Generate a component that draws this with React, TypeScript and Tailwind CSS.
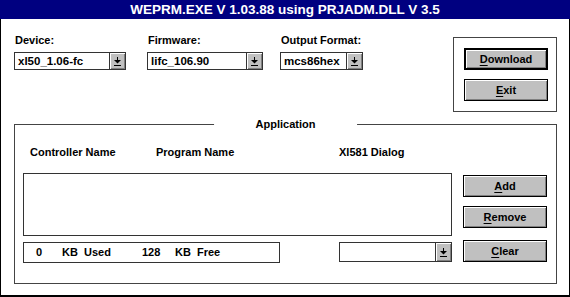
import React from "react";

function DropArrow() {
  return (
    <svg width="7" height="9" viewBox="0 0 7 9">
      <rect x="3" y="0" width="1" height="3" fill="#000" />
      <polygon points="0,3 7,3 3.5,6.5" fill="#000" />
      <rect x="0" y="8" width="7" height="1" fill="#000" />
    </svg>
  );
}

function Combo({ value, className }: { value: string; className: string }) {
  return (
    <div className={`flex border border-[#333] bg-white ${className}`}>
      <div className="flex-1 pl-[3px] text-[11.5px] leading-[16px] overflow-hidden whitespace-nowrap">{value}</div>
      <div className="w-[16px] border-l border-[#333] bg-[#c0c0c0] shadow-[inset_1px_1px_0_#fff,inset_-1px_-1px_0_#808080] flex items-center justify-center">
        <DropArrow />
      </div>
    </div>
  );
}

function Field({ label, value, className }: { label: string; value: string; className: string }) {
  return (
    <div className={className}>
      <div className="pl-px text-[11px] leading-[13px] mb-[5px]">{label}</div>
      <Combo value={value} className="h-[18px] w-full" />
    </div>
  );
}

function Btn({ k, rest, main, className }: { k: string; rest: string; main?: boolean; className?: string }) {
  return (
    <button
      className={`w-[84px] h-[22px] bg-[#c0c0c0] text-[11px] leading-none font-bold shadow-[inset_1px_1px_0_#fff,inset_-1px_-1px_0_#808080] ${
        main ? "border-2 border-black" : "border border-black"
      } ${className ?? ""}`}
    >
      <span className="underline underline-offset-2">{k}</span>
      {rest}
    </button>
  );
}

export default function App() {
  return (
    <div className="w-[570px] h-[297px] bg-white border-x border-b-2 border-black flex flex-col font-['Liberation_Sans',Arial,sans-serif] font-bold text-black">
      {/* Title bar */}
      <div className="h-[19px] -mx-px bg-[#000080] text-white text-[13.5px] leading-[19px] text-center">
        WEPRM.EXE V 1.03.88 using PRJADM.DLL V 3.5
      </div>

      {/* Top section */}
      <div className="flex pl-[13px]">
        <div className="flex pt-[15px]">
          <Field label="Device:" value="xl50_1.06-fc" className="w-[112px]" />
          <Field label="Firmware:" value="lifc_106.90" className="w-[116px] ml-[21px]" />
          <Field label="Output Format:" value="mcs86hex" className="w-[83px] ml-[17px]" />
        </div>
        <div className="ml-auto mr-[12px] mt-[18px] w-[104px] h-[75px] border border-[#444] pl-[10px] pt-[10px] flex flex-col gap-[9px]">
          <Btn k="D" rest="ownload" main />
          <Btn k="E" rest="xit" />
        </div>
      </div>

      {/* Application group */}
      <div className="relative mt-[12px] ml-[13px] mr-[12px] h-[160px] border border-[#444]">
        <div className="absolute -top-[7px] left-1/2 -translate-x-1/2 bg-white px-[42px] text-[11px] leading-[13px]">
          Application
        </div>
        <div className="flex pt-[21px] pl-[15px] text-[11px] leading-[13px]">
          <div className="w-[126px]">Controller Name</div>
          <div className="w-[183px]">Program Name</div>
          <div>Xl581 Dialog</div>
        </div>
        <div className="flex mt-[14px] ml-[8px]">
          <div className="w-[429px]">
            <div className="h-[63px] border border-[#333] bg-white" />
            <div className="flex justify-between items-start mt-[6px]">
              <div className="w-[257px] h-[21px] border border-[#333] flex items-center pl-[12px] text-[11px] whitespace-pre">
                <span className="w-[26px]">0</span>
                <span className="w-[80px]">KB  Used</span>
                <span className="w-[33px]">128</span>
                <span>KB  Free</span>
              </div>
              <Combo value="" className="h-[20px] w-[113px]" />
            </div>
          </div>
          <div className="ml-[11px] flex flex-col pt-[2px]">
            <Btn k="A" rest="dd" />
            <Btn k="R" rest="emove" className="mt-[9px]" />
            <Btn k="C" rest="lear" className="mt-[12px]" />
          </div>
        </div>
      </div>
    </div>
  );
}
